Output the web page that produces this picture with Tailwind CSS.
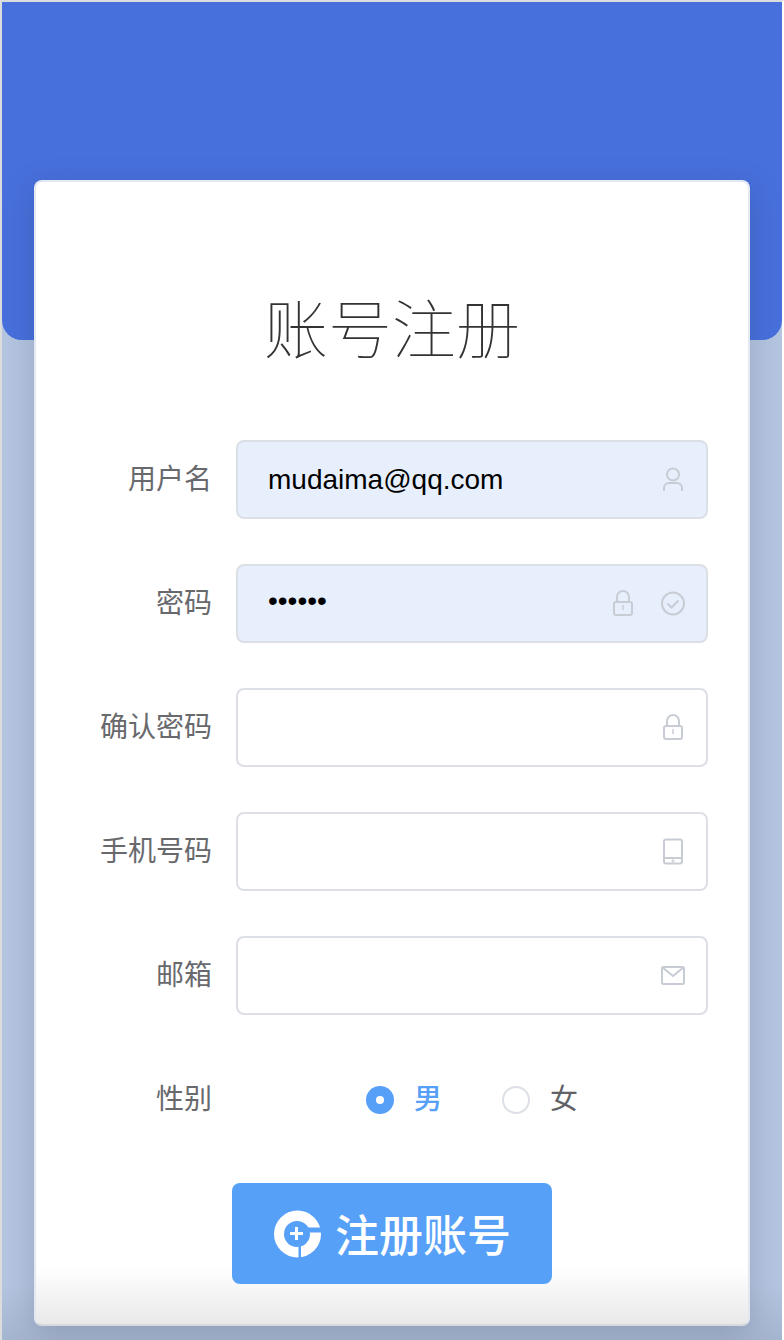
<!DOCTYPE html>
<html lang="zh">
<head>
<meta charset="utf-8">
<script src="https://cdn.jsdelivr.net/npm/@tailwindcss/browser@4"></script>
</head>
<body class="m-0">
<div class="w-[784px] h-[1340px] overflow-hidden border-x-2 border-t-2 border-x-[#dcdcdc] border-t-[#dcdcdc] border-r-white bg-gradient-to-b from-[#b5c5e0] from-[96%] to-[#a6b5cf] font-['Liberation_Sans','Noto_Sans_CJK_SC',sans-serif]">
  <div class="h-[338px] rounded-b-[20px] bg-[#4870dc]"></div>
  <div class="relative mx-[32px] mt-[-160px] h-[1146px] rounded-[8px] border-2 border-[#e4e8f2] border-b-[#d8dade] bg-gradient-to-b from-white from-[95%] to-[#e9e9e9] shadow-[0_8px_32px_rgba(30,40,70,0.2)]">
    <h1 class="mt-[97px] h-[92px] text-center text-[64px] font-thin leading-[92px] text-[#333] font-['Noto_Sans_CJK_SC',sans-serif]">账号注册</h1>
    <div class="mt-[69px] flex flex-col gap-[45px]">
      <div class="flex h-[79px] items-center gap-[24px]">
        <div class="w-[176px] text-right text-[28px] text-[#68696d]">用户名</div>
        <div class="flex h-full w-[472px] items-center rounded-[8px] border-2 border-[#dcdfe6] bg-[#e8effc] pl-[30px] pr-[19px]">
          <div class="flex-1 text-[28px] text-black">mudaima@qq.com</div>
          <svg class="h-[28px] w-[28px]" viewBox="0 0 28 28" fill="none" stroke="#c8ccd4" stroke-width="2"><circle cx="14" cy="8.500" r="6"/><path d="M5 25v-3a5 5 0 0 1 5-5h8a5 5 0 0 1 5 5v3"/></svg>
        </div>
      </div>
      <div class="flex h-[79px] items-center gap-[24px]">
        <div class="w-[176px] text-right text-[28px] text-[#68696d]">密码</div>
        <div class="flex h-full w-[472px] items-center gap-[22px] rounded-[8px] border-2 border-[#dcdfe6] bg-[#e8effc] pl-[30px] pr-[19px]">
          <div class="flex-1 pb-[5px] text-[28px] text-black">••••••</div>
          <svg class="h-[28px] w-[28px]" viewBox="0 0 28 28" fill="none" stroke="#c8ccd4" stroke-width="2"><rect x="5" y="12" width="18" height="13" rx="2"/><path d="M8 12V7a6 6 0 0 1 12 0v5"/><path stroke-width="1.500" d="M14 15v5"/></svg>
          <svg class="h-[28px] w-[28px]" viewBox="0 0 28 28" fill="none" stroke="#c8ccd4" stroke-width="2"><circle cx="14" cy="13.500" r="11"/><path d="M8.500 13.500l4 4 7-7"/></svg>
        </div>
      </div>
      <div class="flex h-[79px] items-center gap-[24px]">
        <div class="w-[176px] text-right text-[28px] text-[#68696d]">确认密码</div>
        <div class="flex h-full w-[472px] items-center justify-end rounded-[8px] border-2 border-[#dcdfe6] bg-white pl-[30px] pr-[19px]">
          <svg class="h-[28px] w-[28px]" viewBox="0 0 28 28" fill="none" stroke="#c8ccd4" stroke-width="2"><rect x="5" y="12" width="18" height="13" rx="2"/><path d="M8 12V7a6 6 0 0 1 12 0v5"/><path stroke-width="1.500" d="M14 15v5"/></svg>
        </div>
      </div>
      <div class="flex h-[79px] items-center gap-[24px]">
        <div class="w-[176px] text-right text-[28px] text-[#68696d]">手机号码</div>
        <div class="flex h-full w-[472px] items-center justify-end rounded-[8px] border-2 border-[#dcdfe6] bg-white pl-[30px] pr-[19px]">
          <svg class="h-[28px] w-[28px]" viewBox="0 0 28 28" fill="none" stroke="#c8ccd4" stroke-width="2"><rect x="5" y="1.500" width="18" height="24" rx="2"/><path d="M5 20h18"/><circle cx="14" cy="22.800" r="0.500"/></svg>
        </div>
      </div>
      <div class="flex h-[79px] items-center gap-[24px]">
        <div class="w-[176px] text-right text-[28px] text-[#68696d]">邮箱</div>
        <div class="flex h-full w-[472px] items-center justify-end rounded-[8px] border-2 border-[#dcdfe6] bg-white pl-[30px] pr-[19px]">
          <svg class="h-[28px] w-[28px]" viewBox="0 0 28 28" fill="none" stroke="#c8ccd4" stroke-width="2"><rect x="3" y="5" width="22" height="17" rx="1.500"/><path d="M3 5l11 9 11-9"/></svg>
        </div>
      </div>
      <div class="flex h-[79px] items-center gap-[24px]">
        <div class="w-[176px] text-right text-[28px] text-[#68696d]">性别</div>
        <div class="flex h-full w-[472px] items-center justify-center gap-[60px]">
          <div class="flex items-center gap-[20px]">
            <span class="flex h-[28px] w-[28px] items-center justify-center rounded-full bg-[#57a0f8]"><span class="h-[8px] w-[8px] rounded-full bg-white"></span></span>
            <span class="text-[28px] font-medium leading-[28px] text-[#57a0f8]">男</span>
          </div>
          <div class="flex items-center gap-[20px]">
            <span class="h-[28px] w-[28px] rounded-full border-2 border-[#dcdfe6] bg-white"></span>
            <span class="text-[28px] leading-[28px] text-[#606266]">女</span>
          </div>
        </div>
      </div>
    </div>
    <div class="mt-[44px] flex justify-center">
      <div class="flex h-[101px] w-[320px] items-center justify-center gap-[14px] rounded-[8px] bg-[#57a0f8] text-[44px] font-medium text-white">
        <svg class="h-[48px] w-[48px]" viewBox="0 0 48 48"><circle cx="24.500" cy="24" r="23.500" fill="#fff"/><circle cx="24" cy="24" r="13" fill="#57a0f8"/><rect x="30" y="17.500" width="18" height="5" fill="#57a0f8"/><rect x="25.500" y="30" width="2.500" height="18" fill="#57a0f8"/><path fill="none" stroke="#fff" stroke-width="3" d="M23.500 17v13M17 23.500h13"/></svg>
        <span class="pt-[6px]">注册账号</span>
      </div>
    </div>
  </div>
</div>
</body>
</html>
